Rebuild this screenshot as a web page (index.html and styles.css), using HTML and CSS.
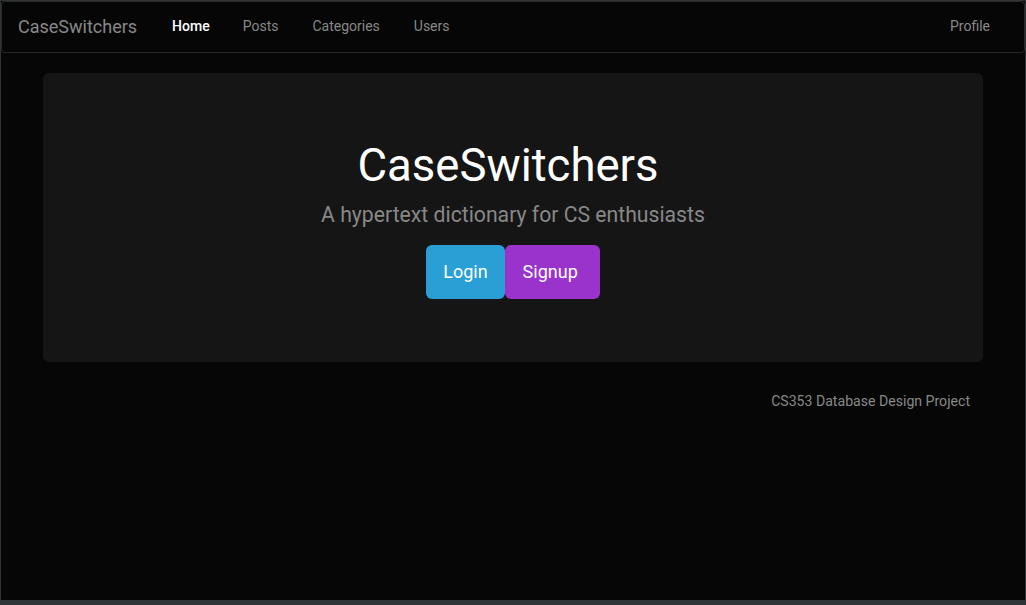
FILE: index.html
```html
<!DOCTYPE html>
<html lang="en">
<head>
<meta charset="utf-8">
<title>CaseSwitchers</title>
<link rel="stylesheet" href="styles.css">
</head>
<body>
<div class="window">
  <nav class="navbar">
    <a class="brand" href="#">CaseSwitchers</a>
    <ul class="nav">
      <li><a class="active" href="#">Home</a></li>
      <li><a href="#">Posts</a></li>
      <li><a href="#">Categories</a></li>
      <li><a href="#">Users</a></li>
    </ul>
    <ul class="nav nav-right">
      <li><a href="#">Profile</a></li>
    </ul>
  </nav>
  <main class="container">
    <section class="jumbotron">
      <h1>CaseSwitchers</h1>
      <p class="lead">A hypertext dictionary for CS enthusiasts</p>
      <p class="actions"><a class="btn btn-login" href="#">Login</a><a class="btn btn-signup" href="#">Signup</a></p>
    </section>
    <footer class="footer">CS353 Database Design Project</footer>
  </main>
</div>
</body>
</html>
```
FILE: styles.css
```css
html {
  background: #2f3436;
  height: 100%;
}
body {
  margin: 0;
  font-family: Roboto, "Liberation Sans", sans-serif;
  font-size: 14px;
  line-height: 20px;
  color: #888;
}
.window {
  box-sizing: border-box;
  height: 601px;
  border: 1px solid #2f3436;
  background: #060606;
}
.navbar {
  display: flex;
  align-items: center;
  height: 50px;
  border: 1px solid #282828;
  border-radius: 4px;
  background: #060606;
  padding: 0 0 0 16px;
}
.brand {
  font-size: 18px;
  color: #888;
  text-decoration: none;
  margin-right: 18px;
}
.nav {
  display: flex;
  list-style: none;
  margin: 0;
  padding: 0 0 2px;
}
.nav a {
  display: block;
  padding: 0 17px;
  color: #888;
  text-decoration: none;
  line-height: 48px;
}
.nav a.active {
  color: #fff;
  font-weight: 500;
  padding-right: 16px;
}
.nav-right {
  margin-left: auto;
  margin-right: 17px;
}
.container {
  width: 940px;
  margin: 20px auto 0;
}
.jumbotron {
  background: #151515;
  border-radius: 6px;
  padding: 49px 60px 48px;
  text-align: center;
}
.jumbotron h1 {
  margin: 20px 0 10px;
  padding-right: 10px;
  font-size: 45.5px;
  line-height: 48px;
  font-weight: 400;
  color: #fff;
}
.lead {
  margin: 0 0 15px;
  font-size: 21.2px;
  line-height: 30px;
  color: #888;
}
.actions {
  margin: 0 0 15px;
  display: flex;
  justify-content: center;
}
.btn {
  display: block;
  font-size: 18px;
  line-height: 24px;
  padding: 15px 17px;
  border-radius: 6px;
  color: #fff;
  text-decoration: none;
}
.btn-login {
  background: #2a9fd6;
}
.btn-signup {
  background: #9933cc;
  padding-left: 18px;
  padding-right: 22px;
}
.footer {
  margin-top: 29px;
  text-align: right;
  padding-right: 13px;
  font-size: 14.1px;
}
```
